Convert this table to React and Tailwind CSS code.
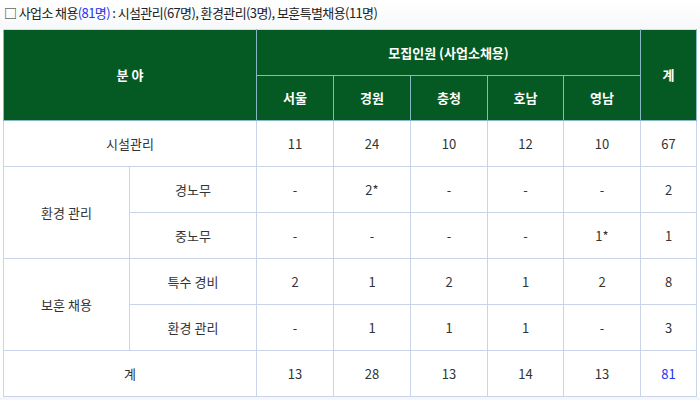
import React from 'react';

const regions = ['서울', '경원', '충청', '호남', '영남'];

const rows = [
  { group: '시설관리', span: 1, full: true, values: ['11', '24', '10', '12', '10'], total: '67' },
  { group: '환경 관리', span: 2, sub: '경노무', values: ['-', '2*', '-', '-', '-'], total: '2' },
  { sub: '중노무', values: ['-', '-', '-', '-', '1*'], total: '1' },
  { group: '보훈 채용', span: 2, sub: '특수 경비', values: ['2', '1', '2', '1', '2'], total: '8' },
  { sub: '환경 관리', values: ['-', '1', '1', '1', '-'], total: '3' },
];

const td = 'border border-[#c9d3ea] text-center align-middle h-[46px] p-0';
const th = 'border border-[#86b9c4] text-center align-middle p-0 font-bold text-white';

export default function App() {
  return (
    <div
      className="w-[700px] h-[400px] bg-white text-[13px] text-[#333] overflow-hidden"
      style={{ fontFamily: '"Noto Sans CJK KR", "Noto Sans", sans-serif' }}
    >
      <div className="h-[29px] pl-[4px] pt-[2px] leading-[22px] tracking-[-0.6px] text-[#222] bg-gradient-to-b from-white to-[#f7f8fa]">
        □ 사업소 채용<span className="text-[#2233ee]">(81명)</span> : 시설관리(67명), 환경관리(3명), 보훈특별채용(11명)
      </div>
      <div className="pl-[3px]">
        <table className="border-collapse table-fixed w-[693px]">
          <colgroup>
            <col className="w-[126px]" />
            <col className="w-[127px]" />
            <col className="w-[77px]" />
            <col className="w-[77px]" />
            <col className="w-[77px]" />
            <col className="w-[76px]" />
            <col className="w-[77px]" />
            <col className="w-[56px]" />
          </colgroup>
          <thead className="bg-[#045a22]">
            <tr className="h-[46px]">
              <th colSpan={2} rowSpan={2} className={th + ' border-t-[#cfe3e0]'}>
                분 야
              </th>
              <th colSpan={5} className={th + ' border-t-[#cfe3e0]'}>
                모집인원 (사업소채용)
              </th>
              <th rowSpan={2} className={th + ' border-t-[#cfe3e0]'}>
                계
              </th>
            </tr>
            <tr className="h-[45px]">
              {regions.map((r) => (
                <th key={r} className={th}>
                  {r}
                </th>
              ))}
            </tr>
          </thead>
          <tbody>
            {rows.map((row, i) => (
              <tr key={i}>
                {row.full ? (
                  <td colSpan={2} className={td}>
                    {row.group}
                  </td>
                ) : (
                  <>
                    {row.group && (
                      <td rowSpan={row.span} className={td}>
                        {row.group}
                      </td>
                    )}
                    <td className={td}>{row.sub}</td>
                  </>
                )}
                {row.values.map((v, j) => (
                  <td key={j} className={td}>
                    {v}
                  </td>
                ))}
                <td className={td}>{row.total}</td>
              </tr>
            ))}
            <tr>
              <td colSpan={2} className={td}>
                계
              </td>
              {['13', '28', '13', '14', '13'].map((v, j) => (
                <td key={j} className={td}>
                  {v}
                </td>
              ))}
              <td className={td + ' text-[#2233ee]'}>81</td>
            </tr>
          </tbody>
        </table>
      </div>
      <div className="h-[10px] bg-[#f4f6f9]" />
    </div>
  );
}
